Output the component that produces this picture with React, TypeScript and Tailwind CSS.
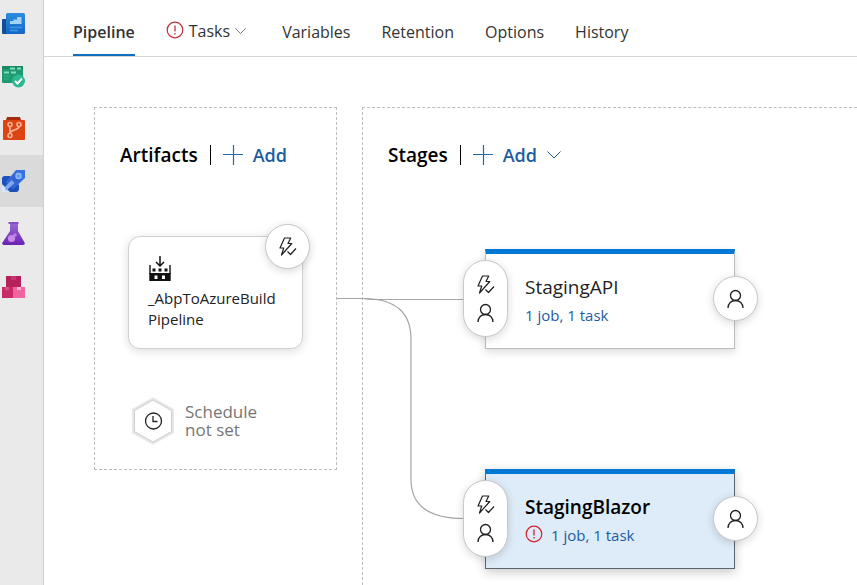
import type { ReactNode } from "react";

function BoardsIcon() {
  return (
    <svg width="24" height="24" viewBox="0 0 24 24" aria-hidden="true">
      <defs>
        <linearGradient id="ov" x1="0" y1="0" x2="0" y2="1">
          <stop offset="0" stopColor="#2b8de0" />
          <stop offset="1" stopColor="#1566c4" />
        </linearGradient>
      </defs>
      <path d="M1 8a1 1 0 0 1 1-1h5v15H2a1 1 0 0 1-1-1z" fill="#124f96" />
      <rect x="5" y="1" width="19" height="21" rx="1.5" fill="url(#ov)" />
      <path d="M9 12V9h3.500V7.500H16V5h4.500v7z" fill="#9fd4f8" />
      <path d="M9 15.500h12M9 18.500h8" stroke="#3f97e2" strokeWidth="1.300" />
    </svg>
  );
}

function WorkIcon() {
  return (
    <svg width="24" height="24" viewBox="0 0 24 24" aria-hidden="true">
      <rect x="1" y="1" width="21" height="17" rx="1" fill="#1f9a70" />
      <path d="M1 2a1 1 0 0 1 1-1h19a1 1 0 0 1 1 1v2H1z" fill="#178a62" />
      <path d="M9 3.500h5M16 3.500h4M3 7.500h5M10 7.500h5" stroke="#7fe0bd" strokeWidth="1.800" />
      <path d="M3 11h6M3 14h5" stroke="#2dab80" strokeWidth="1.300" />
      <circle cx="17.500" cy="16" r="6.500" fill="#2cb992" />
      <path d="M14 16l2.500 2.500 4.500-5" fill="none" stroke="#fff" strokeWidth="2" />
    </svg>
  );
}

function ReposIcon() {
  return (
    <svg width="24" height="24" viewBox="0 0 24 24" aria-hidden="true">
      <path d="M6 0h13l1 3H5z" fill="#a42c0c" />
      <path d="M3 3h20a1 1 0 0 1 1 1v18a1 1 0 0 1-1 1H3a1 1 0 0 1-1-1V4a1 1 0 0 1 1-1z" fill="#dc4414" />
      <g fill="none" stroke="#ffb59b" strokeWidth="1.500">
        <circle cx="9" cy="7.500" r="2" />
        <circle cx="18" cy="7.500" r="2" />
        <circle cx="9" cy="18.500" r="2" />
        <path d="M9 9.500v7M18 9.500c0 4-8 2.500-9 7" />
      </g>
    </svg>
  );
}

function RocketIcon() {
  return (
    <svg width="24" height="24" viewBox="0 0 24 24" aria-hidden="true">
      <path d="M1 8.500 3 7h6l9 9v5l-2 2H9l-8-8z" fill="#1d50ba" />
      <path d="M24 1v8L12 20l-7-7L15 1z" fill="#3a72e2" />
      <path d="M5 13l8-8 7 7-8 8z" fill="#3366d4" />
      <circle cx="17.500" cy="7" r="3.200" fill="#8fbdf8" />
      <circle cx="17.500" cy="7" r="1.800" fill="#5f9af3" />
      <path d="M2 20 10.500 11l3 3L5 22z" fill="#7ea9f0" />
      <path d="M1 16v7h6.500l-3-2-.5-2.500z" fill="#d5e6fd" />
    </svg>
  );
}

function FlaskIcon() {
  return (
    <svg width="24" height="24" viewBox="0 0 24 24" aria-hidden="true">
      <defs>
        <linearGradient id="fl" x1="0" y1="0" x2="0" y2="1">
          <stop offset="0" stopColor="#9a6bd2" />
          <stop offset="1" stopColor="#6a22b4" />
        </linearGradient>
      </defs>
      <path d="M9 1h8v8l6.500 11.500c.8 1.500 0 2.500-1.500 2.500H3c-1.500 0-2.300-1-1.500-2.500L9 9z" fill="url(#fl)" />
      <path d="M7.500 0h10v2h-10z" fill="#8a4fc6" />
      <circle cx="10.500" cy="16.500" r="3.600" fill="#c78aea" />
      <circle cx="14" cy="13" r="1.800" fill="#bd82e4" />
    </svg>
  );
}

function PackagesIcon() {
  return (
    <svg width="24" height="24" viewBox="0 0 24 24" aria-hidden="true">
      <rect x="5" y="1" width="15" height="12" fill="#b5215b" />
      <rect x="1" y="12" width="11" height="11" fill="#c92a68" />
      <rect x="12" y="12" width="12" height="11" fill="#f065a0" />
      <rect x="10" y="1" width="5" height="4" fill="#cb3470" />
      <rect x="4" y="12" width="4" height="3" fill="#d95088" />
      <rect x="16" y="12" width="4" height="3" fill="#fcb2d0" />
    </svg>
  );
}

function AlertIcon({ className }: { className: string }) {
  return (
    <svg width="18" height="18" viewBox="0 0 18 18" className={className} aria-label="Needs attention">
      <circle cx="9" cy="9" r="7.800" fill="none" stroke="currentColor" strokeWidth="1.200" />
      <path d="M9 4.500v6M9 12v1.500" stroke="currentColor" strokeWidth="1.300" />
    </svg>
  );
}

function Chevron({ className }: { className: string }) {
  return (
    <svg viewBox="0 0 14 8" className={className} aria-hidden="true">
      <path d="M.5.500 7 7 13.500.5" fill="none" stroke="currentColor" strokeWidth="1" />
    </svg>
  );
}

function PlusIcon() {
  return (
    <svg width="20" height="20" viewBox="0 0 20 20" aria-hidden="true">
      <path d="M0 9.500h20M10.500 0v20" stroke="#2468ab" strokeWidth="1.200" />
    </svg>
  );
}

function TriggerIcon() {
  return (
    <svg width="18" height="20" viewBox="0 0 18 20" aria-hidden="true">
      <g fill="none" stroke="#1f1f1f" strokeWidth="1.200" strokeLinejoin="round">
        <path d="M5.500 1h6.200L9 6.500h3.800L2.500 18l2.200-7H1z" />
        <path d="M8.500 14.500l3 3 5.500-6" />
      </g>
    </svg>
  );
}

function PersonIcon() {
  return (
    <svg width="18" height="20" viewBox="0 0 18 20" aria-hidden="true">
      <g fill="none" stroke="#1f1f1f" strokeWidth="1.300">
        <circle cx="8.500" cy="6.500" r="5" />
        <path d="M1 19c0-4.500 3.300-7.500 7.500-7.500s7.500 3 7.500 7.500" />
      </g>
    </svg>
  );
}

function BuildIcon() {
  return (
    <svg width="24" height="26" viewBox="0 0 24 26" aria-hidden="true">
      <path d="M12 0v9.500M8 6l4 4 4-4" fill="none" stroke="#111" strokeWidth="1.500" />
      <path d="M2 9v9M22 9v9" stroke="#111" strokeWidth="1.400" />
      <path d="M4.500 12.500h3v3h-3zM10.500 12.500h3v3h-3zM16.500 12.500h3v3h-3z" fill="#111" />
      <path fillRule="evenodd" d="M1.300 17h21.400v8H1.300zM6.500 19.500v3.500h3v-3.500zM14 19.500v3.500h3v-3.500z" fill="#111" />
    </svg>
  );
}

function ScheduleIcon() {
  return (
    <svg width="44" height="48" viewBox="0 0 44 48" className="shrink-0" aria-hidden="true">
      <path d="M22 2 41.500 13v22L22 46 2.500 35V13z" fill="#fff" stroke="#e6e6e6" strokeWidth="3" />
      <path d="M22 3 40.500 13.500v21L22 45 3.500 34.500v-21z" fill="#fff" stroke="#cfcfcf" strokeWidth="1" />
      <circle cx="22.500" cy="24" r="8" fill="none" stroke="#222" strokeWidth="1.300" />
      <path d="M22 19v5.500h4.500" fill="none" stroke="#222" strokeWidth="1.300" />
    </svg>
  );
}

const services: { name: string; icon: ReactNode; row: string }[] = [
  { name: "Overview", icon: <BoardsIcon />, row: "h-[51px] pb-1" },
  { name: "Boards", icon: <WorkIcon />, row: "h-[52px]" },
  { name: "Repos", icon: <ReposIcon />, row: "h-[52px]" },
  { name: "Pipelines", icon: <RocketIcon />, row: "h-[52px] bg-[#dadada]" },
  { name: "Test Plans", icon: <FlaskIcon />, row: "h-[53px]" },
  { name: "Artifacts", icon: <PackagesIcon />, row: "h-[53px]" },
];

const round = "flex items-center justify-center border border-[#c8c8c8] bg-white shadow-[0_2px_8px_rgba(0,0,0,0.16)]";

function PanelTitle({ title, children }: { title: string; children?: ReactNode }) {
  return (
    <div className="flex h-7 items-center">
      <h2 className="text-[19px] leading-7 font-semibold text-black">{title}</h2>
      <span className="mx-3 h-5 w-px bg-black" />
      <button className="flex items-center gap-[10px] text-[18px] leading-7 font-semibold text-[#1d5d9f]">
        <PlusIcon />
        Add
        {children}
      </button>
    </div>
  );
}

function Stage({ name, selected = false }: { name: string; selected?: boolean }) {
  return (
    <article
      className={
        selected
          ? "relative h-[100px] w-[250px] border border-t-[5px] border-[#5c6670] border-t-[#0078d4] bg-[#deebf8] shadow-[0_3px_10px_rgba(0,0,0,0.22)]"
          : "relative h-[100px] w-[250px] border border-t-[5px] border-[#bdbdbd] border-t-[#0078d4] bg-white shadow-[0_3px_8px_rgba(0,0,0,0.14)]"
      }
    >
      <div className="pt-[19px] pl-[39px]">
        <h3 className={selected ? "text-[19px] leading-7 font-semibold text-black" : "text-[19px] leading-7 text-[#1f1f1f]"}>
          {name}
        </h3>
        <div className="flex items-center gap-2">
          {selected && <AlertIcon className="mb-[2px] text-[#d3222e]" />}
          <a href="#tasks" className="text-[15px] leading-7 text-[#1d5d9f]">
            1 job, 1 task
          </a>
        </div>
      </div>
      <button
        aria-label="Pre-deployment conditions"
        className={`${round} absolute top-[6px] -left-[23px] h-[77px] w-[45px] flex-col gap-2 rounded-full`}
      >
        <TriggerIcon />
        <PersonIcon />
      </button>
      <button
        aria-label="Post-deployment conditions"
        className={`${round} absolute top-[22px] -right-[24px] size-[45px] rounded-full`}
      >
        <PersonIcon />
      </button>
    </article>
  );
}

export default function App() {
  return (
    <div className="flex h-screen overflow-hidden bg-white font-['Open_Sans','Noto_Sans',sans-serif] text-[#333]">
      <nav aria-label="Services" className="w-11 shrink-0 border-r border-[#d0d0d0] bg-[#eaeaea]">
        {services.map((s) => (
          <a key={s.name} href="#service" aria-label={s.name} className={`${s.row} flex items-center pl-px`}>
            {s.icon}
          </a>
        ))}
      </nav>

      <div className="flex min-w-0 flex-1 flex-col">
        <nav aria-label="Pipeline sections" className="flex h-[57px] shrink-0 gap-[31px] border-b border-[#d6d6d6] pl-[29px] text-[16px] leading-6">
          <a href="#pipeline" className="flex h-14 items-center border-b-2 border-[#106ebe] pt-[10px] font-semibold">
            Pipeline
          </a>
          <a href="#tasks" className="flex h-14 items-center gap-[5px] pt-[6px] pr-[5px]">
            <AlertIcon className="mb-[2px] text-[#c0303a]" />
            Tasks
            <Chevron className="w-[11px] text-[#555]" />
          </a>
          {["Variables", "Retention", "Options", "History"].map((t) => (
            <a key={t} href="#section" className="flex h-14 items-center pt-2">
              {t}
            </a>
          ))}
        </nav>

        <main className="flex flex-1 items-start gap-[25px] pt-[50px] pl-[50px]">
          <section className="h-[363px] w-[243px] shrink-0 border border-dashed border-[#bdbdbd] pt-[33px]">
            <div className="pl-[25px]">
              <PanelTitle title="Artifacts" />
            </div>
            <article className="relative mt-[67px] ml-[33px] h-[113px] w-[175px] rounded-xl border border-[#d0d0d0] bg-white pt-[19px] pl-[19px] shadow-[0_2px_10px_rgba(0,0,0,0.14)]">
              <BuildIcon />
              <p className="mt-[6px] text-[15px] leading-[21px] text-[#222]">
                _AbpToAzureBuild
                <br />
                Pipeline
              </p>
              <button
                aria-label="Continuous deployment trigger"
                className={`${round} absolute -top-[13px] -right-[8px] size-[45px] rounded-full`}
              >
                <TriggerIcon />
              </button>
            </article>
            <button className="mt-12 ml-9 flex items-center gap-[10px] text-left text-[17px] leading-[18px] text-[#767676]">
              <ScheduleIcon />
              <span>
                Schedule
                <br />
                not set
              </span>
            </button>
          </section>

          <section className="relative min-w-0 flex-1 border border-r-0 border-dashed border-[#bdbdbd] pt-[33px] pb-10">
            <svg width="127" height="224" viewBox="0 0 127 224" className="absolute top-[190px] -left-[26px]" aria-hidden="true">
              <g fill="none" stroke="#a6a6a6" strokeWidth="1.200">
                <path d="M0 .5h26l8 1h93" />
                <path d="M26 .5c34 0 48 15 48 41v140c0 26 18 39 53 39" />
              </g>
            </svg>
            <div className="pl-[25px]">
              <PanelTitle title="Stages">
                <Chevron className="w-[14px]" />
              </PanelTitle>
            </div>
            <div className="mt-[80px] flex flex-col gap-[120px] pl-[122px]">
              <Stage name="StagingAPI" />
              <Stage name="StagingBlazor" selected />
            </div>
          </section>
        </main>
      </div>
    </div>
  );
}
